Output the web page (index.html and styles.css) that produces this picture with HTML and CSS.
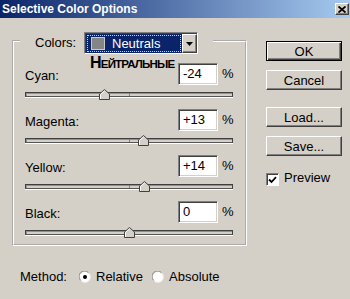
FILE: index.html
```html
<!DOCTYPE html>
<html>
<head>
<meta charset="utf-8">
<link rel="stylesheet" href="styles.css">
</head>
<body>
<div class="window">
  <div class="titlebar">
    <span class="title">Selective Color Options</span>
    <span class="close"><svg width="8" height="7" viewBox="0 0 8 7"><path d="M0.5 0.5 L7.5 6.5 M7.5 0.5 L0.5 6.5" stroke="#000" stroke-width="1.8" fill="none"/></svg></span>
  </div>
  <div class="main">
    <div class="left">
      <fieldset class="group">
        <legend class="legend">
          <span class="legend-label">Colors:</span>
          <span class="select">
            <span class="select-value"><span class="focus"><span class="swatch"></span><span class="select-text">Neutrals</span></span></span>
            <span class="select-btn"><svg width="7" height="4" viewBox="0 0 7 4"><path d="M0 0 H7 L3.5 4 Z" fill="#000"/></svg></span>
          </span>
          <span class="note"><span class="note-big">Н</span>ЕЙТРАЛЬНЫЕ</span>
        </legend>
        <div class="rows">
          <div class="row">
            <div class="row-head"><span class="label">Cyan:</span><span class="field">-24</span><span class="pct">%</span></div>
            <div class="slider"><div class="track"></div><span class="thumb" style="left:38%"><svg width="11" height="11" viewBox="0 0 11 11"><polygon points="0.5,10.5 0.5,5 5.5,0.5 10.5,5 10.5,10.5" fill="#d4d0c8" stroke="#404040"/><polyline points="1.5,10 1.5,5.4 5.5,1.9" fill="none" stroke="#fff"/></svg></span></div>
          </div>
          <div class="row">
            <div class="row-head"><span class="label">Magenta:</span><span class="field">+13</span><span class="pct">%</span></div>
            <div class="slider"><div class="track"></div><span class="thumb" style="left:56.5%"><svg width="11" height="11" viewBox="0 0 11 11"><polygon points="0.5,10.5 0.5,5 5.5,0.5 10.5,5 10.5,10.5" fill="#d4d0c8" stroke="#404040"/><polyline points="1.5,10 1.5,5.4 5.5,1.9" fill="none" stroke="#fff"/></svg></span></div>
          </div>
          <div class="row">
            <div class="row-head"><span class="label">Yellow:</span><span class="field">+14</span><span class="pct">%</span></div>
            <div class="slider"><div class="track"></div><span class="thumb" style="left:57%"><svg width="11" height="11" viewBox="0 0 11 11"><polygon points="0.5,10.5 0.5,5 5.5,0.5 10.5,5 10.5,10.5" fill="#d4d0c8" stroke="#404040"/><polyline points="1.5,10 1.5,5.4 5.5,1.9" fill="none" stroke="#fff"/></svg></span></div>
          </div>
          <div class="row">
            <div class="row-head"><span class="label">Black:</span><span class="field">0</span><span class="pct">%</span></div>
            <div class="slider"><div class="track"></div><span class="thumb" style="left:50%"><svg width="11" height="11" viewBox="0 0 11 11"><polygon points="0.5,10.5 0.5,5 5.5,0.5 10.5,5 10.5,10.5" fill="#d4d0c8" stroke="#404040"/><polyline points="1.5,10 1.5,5.4 5.5,1.9" fill="none" stroke="#fff"/></svg></span></div>
          </div>
        </div>
      </fieldset>
      <div class="method">
        <span class="method-label">Method:</span>
        <span class="radio"><svg width="12" height="12" viewBox="0 0 12 12"><circle cx="6" cy="6" r="5.5" fill="#fff" stroke="#e8e6e0"/><path d="M1.6 9.4 A5 5 0 0 1 9.4 1.6" stroke="#808080" fill="none"/><circle cx="6" cy="6" r="2" fill="#000"/></svg></span>
        <span class="opt opt-rel">Relative</span>
        <span class="radio"><svg width="12" height="12" viewBox="0 0 12 12"><circle cx="6" cy="6" r="5.5" fill="#fff" stroke="#e8e6e0"/><path d="M1.6 9.4 A5 5 0 0 1 9.4 1.6" stroke="#808080" fill="none"/></svg></span>
        <span class="opt">Absolute</span>
      </div>
    </div>
    <div class="right">
      <span class="btn btn-default">OK</span>
      <span class="btn btn-cancel">Cancel</span>
      <span class="btn btn-load">Load...</span>
      <span class="btn btn-save">Save...</span>
      <div class="preview">
        <span class="check"><svg width="9" height="8" viewBox="0 0 9 8"><path d="M1 3.5 L3.5 6 L8 1.2" stroke="#000" stroke-width="1.8" fill="none"/></svg></span>
        <span class="preview-label">Preview</span>
      </div>
    </div>
  </div>
</div>
</body>
</html>
```
FILE: styles.css
```css
* { box-sizing: border-box; }
html, body { margin: 0; padding: 0; }
body {
  background: #d4d0c8;
  font-family: "Liberation Sans", Arial, sans-serif;
  font-size: 13px;
  color: #000;
}
.window {
  width: 350px;
  height: 299px;
  background: #d4d0c8;
  overflow: hidden;
}
.titlebar {
  height: 18px;
  display: flex;
  align-items: center;
  justify-content: space-between;
  background: linear-gradient(to right, #0a246a, #a6caf0);
  padding: 0 1px 0 2px;
}
.title {
  color: #fff;
  font-weight: bold;
  font-size: 12px;
  line-height: 18px;
}
.close {
  width: 14px;
  height: 12px;
  background: #d4d0c8;
  border: 1px solid;
  border-color: #fff #404040 #404040 #fff;
  box-shadow: inset -1px -1px 0 #808080;
  display: flex;
  align-items: center;
  justify-content: center;
}
.main {
  display: flex;
  padding: 14px 0 0 12px;
}
.left { width: 235px; }
.group {
  width: 235px;
  margin: 0;
  min-inline-size: 0;
  border: 2px groove #fff;
  padding: 13px 12px 7px 11px;
}
.legend {
  display: flex;
  align-items: flex-start;
  height: 18px;
  margin-left: -5px;
  padding: 0 15px;
  position: relative;
}
.legend-label {
  width: 49px;
  line-height: 22px;
}
.select {
  display: flex;
  width: 114px;
  height: 22px;
  border: 1px solid;
  border-color: #808080 #fff #fff #808080;
  box-shadow: inset 1px 1px 0 #404040;
  background: #fff;
  padding: 1px 0 0 1px;
}
.select-value {
  flex: 1;
  background: #0a246a;
  padding: 1px;
  height: 19px;
}
.focus {
  display: flex;
  align-items: center;
  height: 17px;
  border: 1px dotted #d8d4a0;
  padding-left: 3px;
}
.swatch {
  width: 14px;
  height: 13px;
  background: #858585;
  border: 1px solid #c8c8c8;
}
.select-text {
  color: #fff;
  margin-left: 7px;
  line-height: 15px;
}
.select-btn {
  width: 15px;
  height: 19px;
  background: #d4d0c8;
  border: 1px solid;
  border-color: #fff #404040 #404040 #fff;
  box-shadow: inset -1px -1px 0 #808080;
  display: flex;
  align-items: center;
  justify-content: center;
}
.note {
  position: absolute;
  left: 70px;
  top: 23px;
  font-weight: bold;
  font-size: 11.5px;
  letter-spacing: -0.8px;
  line-height: 15px;
  white-space: nowrap;
}
.note-big { font-size: 16px; }
.rows {
  display: flex;
  flex-direction: column;
  gap: 10px;
}
.row-head {
  display: flex;
  height: 22px;
}
.label {
  flex: 1;
  padding-top: 5px;
  line-height: 15px;
}
.field {
  width: 40px;
  height: 22px;
  background: #fff;
  border: 1px solid;
  border-color: #808080 #fff #fff #808080;
  box-shadow: inset 1px 1px 0 #404040, inset -1px -1px 0 #d4d0c8;
  padding-left: 4px;
  line-height: 20px;
}
.pct {
  width: 15px;
  padding-left: 4px;
  padding-top: 3px;
  line-height: 15px;
}
.slider {
  position: relative;
  height: 14px;
  padding-top: 7px;
}
.track {
  position: relative;
  height: 5px;
  border: 1px solid #404040;
  border-bottom-color: #555;
  box-shadow: 0 1px 0 #fff, inset 1px 1px 0 #909090;
  background: #d4d0c8;
}
.track::after {
  content: "";
  position: absolute;
  left: 50%;
  top: 0;
  width: 1px;
  height: 3px;
  background: #808080;
}
.thumb {
  position: absolute;
  top: 4px;
  margin-left: -5px;
  width: 11px;
  height: 11px;
  display: block;
}
.thumb svg { display: block; }
.method {
  display: flex;
  align-items: center;
  margin-top: 23px;
  padding-left: 8px;
  line-height: 15px;
}
.method-label { width: 59px; }
.radio {
  width: 12px;
  height: 12px;
  display: flex;
}
.opt { margin-left: 5px; }
.opt-rel { width: 56px; }
.right {
  margin-left: 19px;
  width: 76px;
  padding-top: 9px;
  display: flex;
  flex-direction: column;
}
.btn {
  display: flex;
  align-items: center;
  justify-content: center;
  height: 20px;
  border: 1px solid;
  border-color: #fff #404040 #404040 #fff;
  box-shadow: inset -1px -1px 0 #808080;
  line-height: 15px;
}
.btn-default {
  border: 1px solid #000;
  box-shadow: inset 1px 1px 0 #fff, inset -1px -1px 0 #404040, inset -2px -2px 0 #808080;
}
.btn-cancel { margin-top: 9px; }
.btn-load { margin-top: 17px; }
.btn-save { margin-top: 9px; }
.preview {
  display: flex;
  align-items: flex-start;
  margin-top: 14px;
  line-height: 15px;
}
.check {
  width: 13px;
  height: 13px;
  margin-top: 3px;
  background: #fff;
  border: 1px solid;
  border-color: #808080 #fff #fff #808080;
  box-shadow: inset 1px 1px 0 #404040;
  display: flex;
  align-items: center;
  justify-content: center;
}
.preview-label { margin-left: 5px; }
```
